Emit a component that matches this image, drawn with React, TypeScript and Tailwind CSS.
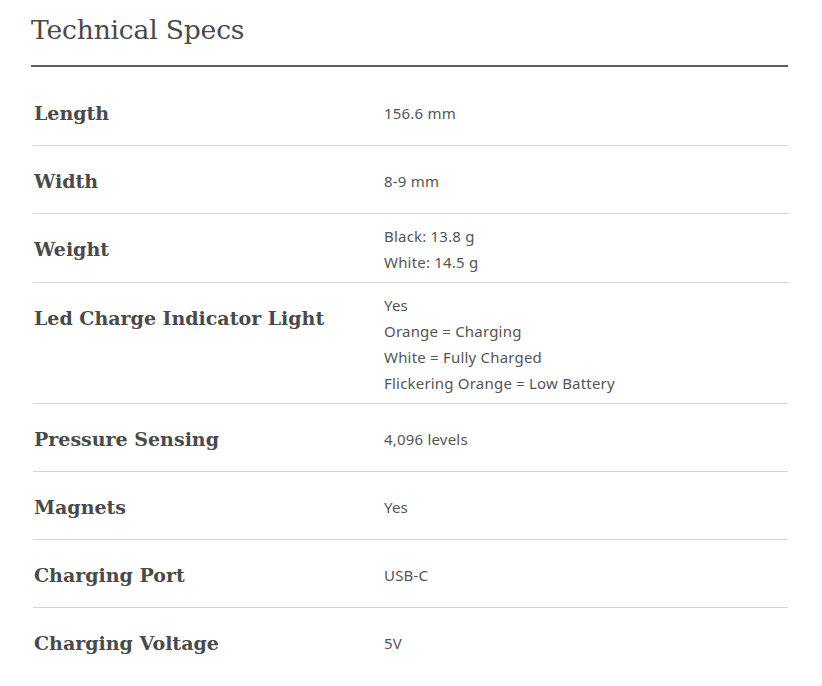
const specs: { label: string; values: string[] }[] = [
  { label: "Length", values: ["156.6 mm"] },
  { label: "Width", values: ["8-9 mm"] },
  { label: "Weight", values: ["Black: 13.8 g", "White: 14.5 g"] },
  {
    label: "Led Charge Indicator Light",
    values: ["Yes", "Orange = Charging", "White = Fully Charged", "Flickering Orange = Low Battery"],
  },
  { label: "Pressure Sensing", values: ["4,096 levels"] },
  { label: "Magnets", values: ["Yes"] },
  { label: "Charging Port", values: ["USB-C"] },
  { label: "Charging Voltage", values: ["5V"] },
];

export default function App() {
  return (
    <div className="min-h-[686px] w-[822px] bg-white pl-[31px] pr-[34px]">
      <h2 className="pt-[12px] pb-[17px] font-['DejaVu_Serif',serif] text-[26.6px] leading-[36px] tracking-[-0.2px] text-[#4a4a4a]">
        Technical Specs
      </h2>
      <div className="h-[2px] bg-[#5c5c5c]" />
      <div className="pt-[11px] pl-[2px]">
        {specs.map((s, i) => (
          <div
            key={s.label}
            className={`flex min-h-[68px] ${i < specs.length - 1 ? "border-b border-[#d4d4d4]" : ""}`}
          >
            <div className="w-[351px] shrink-0 pt-[21px] pl-[1px] font-['DejaVu_Serif',serif] text-[19px] font-bold leading-[28px] text-[#4a4a4a]">
              {s.label}
            </div>
            <div className="flex flex-1 flex-col justify-center pt-[9px] pb-[7px] font-['Noto_Sans',sans-serif] text-[15px] leading-[26px] tracking-[0.2px] text-[#555555]">
              {s.values.map((v) => (
                <span key={v}>{v}</span>
              ))}
            </div>
          </div>
        ))}
      </div>
    </div>
  );
}
